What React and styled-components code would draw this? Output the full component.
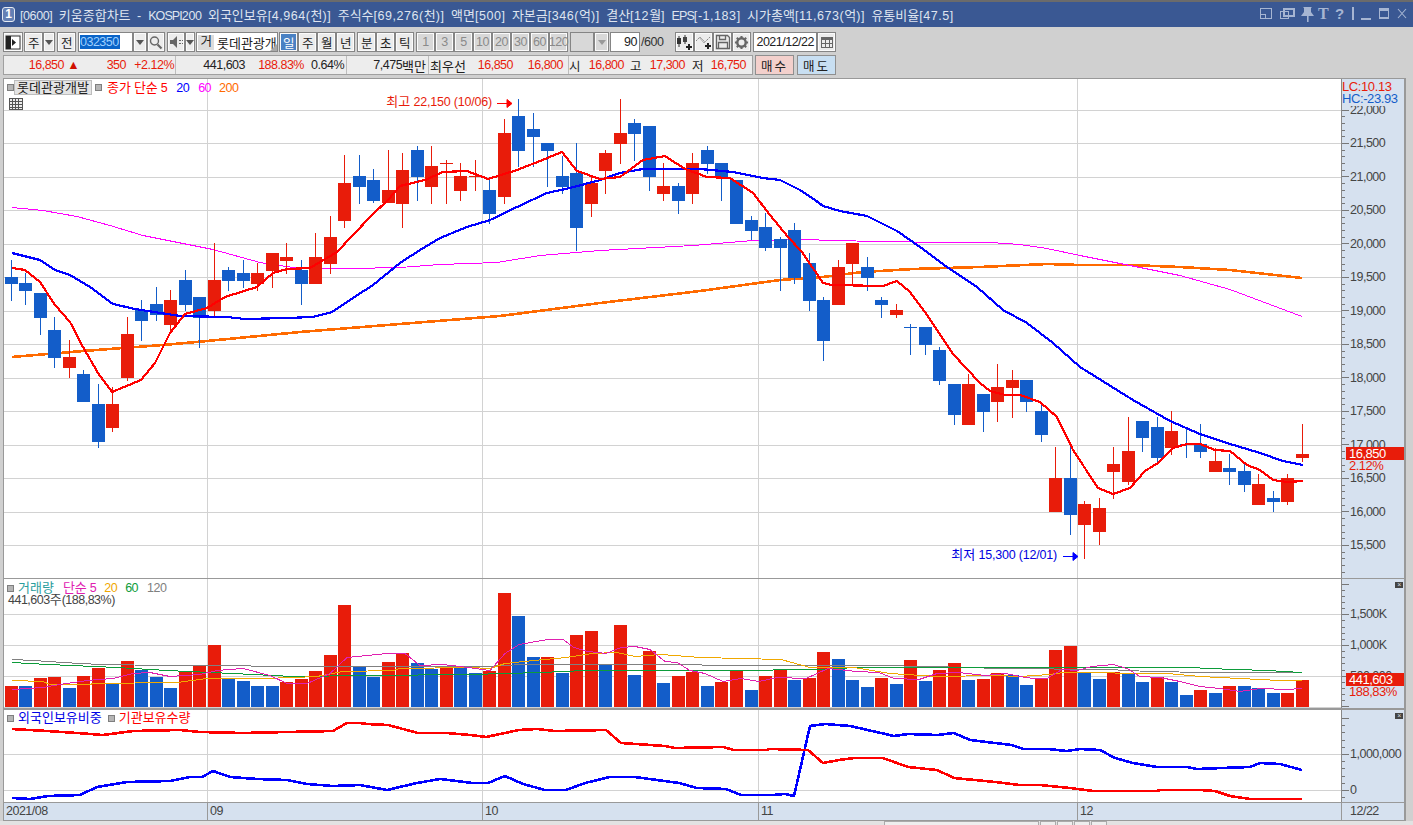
import React from 'react';
import styled, { createGlobalStyle } from 'styled-components';

const FONT = `"Liberation Sans", "Noto Sans CJK KR", sans-serif`;

// [color, wickTop, bodyTop, bodyBottom, wickBottom]
const CANDLES = [
  ['b',260,277,284,301],['b',273,283,291,305],['b',293,293,318,335],['b',317,330,358,368],['r',340,357,368,378],
  ['b',370,374,402,402],['b',384,404,442,448],['r',387,404,428,432],['r',317,334,378,381],['b',300,310,321,341],
  ['b',287,304,315,321],['r',290,300,325,334],['b',270,280,305,311],['b',297,297,318,348],['r',243,280,311,318],
  ['b',267,270,281,291],['b',260,273,281,288],['r',263,273,284,291],['r',253,253,271,288],['r',243,257,261,274],
  ['b',260,270,284,305],['r',233,257,284,284],['r',216,237,264,274],['r',155,183,221,228],['b',155,176,187,204],
  ['b',169,180,201,203],['r',150,190,203,203],['r',153,170,204,228],['b',146,150,177,201],['r',146,166,187,204],
  ['r',160,163,164,204],['r',163,176,191,201],['r',160,176,177,191],['b',180,190,214,224],['r',119,133,197,204],
  ['b',99,116,151,167],['b',113,129,137,167],['b',143,143,151,187],['b',156,176,187,194],['b',143,173,228,251],
  ['r',177,183,204,217],['r',150,153,171,194],['r',99,133,144,164],['b',119,123,134,161],['b',126,126,177,191],
  ['r',163,186,194,201],['b',183,186,201,214],['r',153,163,194,204],['b',146,150,164,174],['b',163,163,177,201],
  ['b',180,180,224,224],['b',216,220,231,240],['b',213,227,248,251],['b',237,239,248,291],['b',223,230,278,284],
  ['b',253,263,301,311],['b',297,300,341,361],['r',260,267,305,305],['r',243,243,264,284],['b',257,267,278,291],
  ['b',297,300,305,318],['r',304,310,315,318],['b',324,327,328,355],['b',327,327,345,355],['b',347,350,381,385],
  ['b',384,384,415,425],['r',374,384,425,425],['b',394,394,412,432],['r',364,387,402,422],['r',370,380,388,418],
  ['b',380,380,402,412],['b',404,411,435,442],['r',447,478,512,512],['b',444,478,515,535],['r',501,504,525,559],
  ['r',498,508,532,545],['r',447,464,472,499],['r',417,451,482,485],['b',421,421,438,452],['b',417,427,458,463],
  ['r',411,431,448,455],['b',428,444,445,458],['b',424,444,452,458],['r',448,461,472,472],['b',454,468,472,485],
  ['b',462,471,485,492],['r',474,484,505,505],['b',491,498,502,512],['r',474,478,502,505],['r',424,454,458,462],
];

// tops of the volume bars, index lines up with the candles
const VOLUME = [
  ['r',686],['b',686],['r',678],['r',677],['b',688],['r',676],['r',668],['b',684],['r',661],['b',670],
  ['b',677],['b',688],['r',672],['r',666],['r',645],['b',679],['b',681],['b',686],['b',686],['r',682],
  ['r',679],['r',671],['r',655],['r',605],['b',667],['b',677],['r',662],['r',653],['b',663],['b',669],
  ['r',668],['b',668],['b',673],['r',671],['r',593],['b',616],['b',657],['r',657],['b',673],['r',635],
  ['r',631],['b',665],['r',625],['b',675],['r',651],['b',683],['r',676],['r',672],['b',686],['r',682],
  ['r',671],['b',690],['r',676],['r',670],['b',680],['r',678],['r',652],['b',659],['b',680],['b',687],
  ['r',678],['b',684],['r',660],['b',681],['r',670],['r',663],['b',680],['r',679],['r',673],['b',675],
  ['b',685],['r',678],['r',650],['r',646],['b',672],['b',679],['r',672],['b',674],['b',682],['r',677],
  ['b',682],['b',695],['r',690],['b',693],['r',686],['b',686],['b',688],['b',693],['r',693],['r',680],
];

const MA5 = '12,268 25,270 40,282 55,305 70,322 83,347 98,373 112,392 141,380 155,363 170,333 185,314 207,308 225,297 257,287 273,273 287,269 310,268 337,252 353,235 372,215 388,200 400,186 408,184 425,180 443,172 467,171 488,179 517,170 540,161 562,152 577,171 600,179 620,177 643,160 665,156 685,169 707,177 730,178 753,193 770,215 788,237 802,252 823,283 832,285 883,286 897,281 910,292 927,315 953,354 980,383 990,391 1005,395 1020,395 1040,402 1057,417 1073,450 1098,488 1113,494 1130,488 1145,471 1158,463 1173,448 1187,444 1200,444 1215,450 1230,451 1247,465 1260,470 1273,480 1287,482 1303,481';
const MA20 = '12,253 40,260 55,270 70,275 90,287 113,304 135,309 180,316 227,317 245,319 287,318 313,317 332,312 353,298 373,285 400,263 420,250 440,238 467,227 490,220 517,207 547,193 570,188 600,180 620,173 643,169 700,169 733,172 763,178 780,180 800,190 815,200 823,206 840,211 867,216 897,231 920,247 947,267 977,287 1003,310 1027,323 1053,343 1080,367 1133,400 1170,421 1200,434 1230,444 1257,452 1283,461 1303,465';
const MA60 = '12,207 43,210 77,216 110,225 143,235 183,243 213,249 260,262 300,268 350,268 400,267 440,264 497,262 540,255 600,250 693,245 753,240 800,239 875,241 947,242 990,242 1020,244 1047,248 1080,255 1130,265 1180,275 1230,289 1302,316';
const MA200 = '12,357 83,351 163,345 207,341 300,332 400,324 500,316 600,303 700,291 780,280 823,277 863,272 913,269 980,267 1047,264 1080,265 1130,265 1180,267 1230,270 1302,278';

const VOL5 = '12,689 43,687 60,684 87,680 113,678 133,673 150,672 170,676 200,674 217,670 243,668 270,675 287,683 307,683 330,673 347,657 387,653 405,653 420,665 443,664 468,667 490,670 505,653 519,644 548,639 563,639 574,647 588,651 606,653 621,647 635,646 650,649 665,661 677,662 690,670 705,673 723,681 741,678 759,681 777,677 806,678 828,668 857,671 879,672 894,678 919,679 937,673 959,672 985,675 1006,673 1020,676 1033,678 1047,678 1062,669 1077,670 1092,666 1113,664 1127,668 1140,676 1160,677 1180,681 1200,686 1220,688 1240,691 1260,688 1287,689 1302,688';
const VOL20 = '12,680 43,681 50,684 90,684 93,683 177,682 207,678 263,678 293,677 317,676 343,671 393,670 400,668 470,667 490,668 505,663 534,660 566,657 592,653 617,652 635,656 661,654 701,657 741,658 781,659 810,667 854,667 890,673 937,676 995,675 1020,676 1050,674 1063,672 1167,673 1200,676 1240,678 1280,680 1302,680';
const VOL60 = '12,662 48,664 117,667 167,670 233,673 293,676 367,675 470,674 541,672 585,670 730,670 817,669 857,667 932,667 1048,667 1193,667 1207,668 1267,670 1302,672';
const VOL120 = '12,659 33,660 63,662 100,664 167,665 333,666 470,666 486,666 523,664 875,665 932,666 1000,668 1107,669 1150,671 1208,672 1302,672';

const FOREIGN = '12,798 30,799 48,796 80,795 97,787 127,782 170,781 190,777 202,777 213,771 230,777 257,779 287,780 307,784 333,786 360,785 387,790 417,783 440,779 472,783 488,783 505,776 523,784 545,790 566,790 585,783 610,777 635,777 679,783 697,788 726,789 741,795 772,795 785,794 794,796 810,726 825,724 850,726 894,736 908,734 937,735 954,733 970,740 995,743 1012,745 1023,749 1048,749 1067,751 1080,749 1100,750 1115,758 1133,763 1157,767 1187,767 1197,769 1222,768 1250,767 1260,763 1280,764 1302,770';
const INSTITUTION = '12,729 47,731 77,733 103,735 133,731 180,730 200,732 243,733 287,732 333,731 347,723 360,723 367,724 388,725 418,733 447,733 470,735 486,737 519,730 537,729 555,731 606,730 621,743 665,746 675,748 723,747 734,750 766,750 770,749 808,750 823,763 839,760 854,758 883,758 908,767 937,770 954,778 995,782 1020,785 1040,785 1070,788 1093,791 1157,791 1160,790 1200,790 1215,791 1230,796 1250,799 1302,799';

const MONTHS = [207, 482, 758, 1077];
const PRICE_TICKS = ['22,000','21,500','21,000','20,500','20,000','19,500','19,000','18,500','18,000','17,500','17,000','16,500','16,000','15,500'];
const PERIODS = ['일', '주', '월', '년'];
const UNITS = ['분', '초', '틱'];
const MINUTES = ['1', '3', '5', '10', '20', '30', '60', '120'];

const RED = '#e81c0a';
const colorOf = (c) => (c === 'r' ? RED : '#135dc9');
const leftOf = (i) => Math.floor(5 + 14.51 * i);

const GlobalStyle = createGlobalStyle`
  html, body {
    margin: 0;
    padding: 0;
    overflow: hidden;
    background: #d0d0d0;
  }
`;

const Window = styled.div`
  width: 1413px;
  height: 825px;
  display: flex;
  flex-direction: column;
  overflow: hidden;
  background: #d0d0d0;
  border-top: 2px solid #6b6b6b;
  box-sizing: border-box;
  font: 12.5px ${FONT};
  letter-spacing: -0.5px;
  color: #222;
`;

const Ko = styled.span`
  font-size: 13px;
  letter-spacing: 0;
`;

const KoSvg = styled.tspan`
  font-size: 13px;
  letter-spacing: 0;
`;

// hangul runs are set a little larger than the digits, as in the terminal's font
const mixed = (text, Tag = Ko) =>
  text.split(/([가-힣]+)/).map((s, i) => (i % 2 ? <Tag key={i}>{s}</Tag> : s));

const TitleBar = styled.div`
  height: 25px;
  flex: none;
  display: flex;
  align-items: center;
  background: #3a5893;
  color: #dfe5f0;
  padding: 0 0 0 2px;
`;

const Badge = styled.div`
  width: 13px;
  height: 15px;
  margin-right: 5px;
  box-sizing: border-box;
  border: 1px solid #e6ebf3;
  border-radius: 3px;
  background: #6480b4;
  color: #fff;
  font-size: 12px;
  font-weight: bold;
  text-align: center;
  line-height: 13px;
  letter-spacing: 0;
`;

const TitleText = styled.div`
  flex: 1;
  white-space: pre;
  letter-spacing: 0.55px;
  word-spacing: 2.4px;
`;

const Tight = styled.span`
  letter-spacing: ${(p) => p.$s}px;
`;

const TitleIcons = styled.div`
  display: flex;
  align-items: center;
`;

const Toolbar = styled.div`
  height: 51px;
  flex: none;
  display: flex;
  flex-direction: column;
  gap: 3px;
  padding: 5px 0 0 3px;
  box-sizing: border-box;
`;

const Row = styled.div`
  display: flex;
  height: ${(p) => p.$h}px;
  align-items: stretch;
`;

const Btn = styled.div`
  width: ${(p) => p.$w}px;
  margin-left: ${(p) => p.$ml || 0}px;
  box-sizing: border-box;
  display: flex;
  align-items: center;
  justify-content: center;
  flex: none;
  border: 1px solid #858585;
  box-shadow: inset 0 0 0 1px #fbfbfb;
  background: ${(p) => (p.$active ? '#4a81c3' : p.$off ? '#d8d8d8' : '#ececec')};
  color: ${(p) => (p.$active ? '#fff' : p.$off ? '#8a8a8a' : '#222')};
  white-space: nowrap;
`;

const Arrow = styled.span`
  width: 0;
  height: 0;
  border-left: 4px solid transparent;
  border-right: 4px solid transparent;
  border-top: 5px solid ${(p) => p.$color || '#555'};
`;

const CodeInput = styled.div`
  width: 55px;
  margin-left: 2px;
  flex: none;
  box-sizing: border-box;
  background: #fff;
  border: 1px solid #858585;
  padding: 2px 1px;
  display: flex;
`;

const Selected = styled.span`
  background: #0a64c8;
  color: #9fd0ff;
  line-height: 15px;
  padding-right: 1px;
`;

const Combo = styled.div`
  width: 82px;
  margin-left: 1px;
  flex: none;
  box-sizing: border-box;
  position: relative;
  display: flex;
  align-items: center;
  gap: 3px;
  background: #fff;
  border: 1px solid #858585;
  padding: 1px;
  overflow: hidden;
  white-space: nowrap;
`;

const ComboTag = styled.span`
  width: 16px;
  height: 15px;
  line-height: 15px;
  background: #dcdcdc;
  text-align: center;
  flex: none;
`;

const ComboCorner = styled.span`
  position: absolute;
  right: 0;
  bottom: 0;
  border-left: 7px solid transparent;
  border-bottom: 7px solid #a8a8a8;
`;

const Field = styled.div`
  width: ${(p) => p.$w}px;
  margin-left: ${(p) => p.$ml || 0}px;
  flex: none;
  box-sizing: border-box;
  background: ${(p) => p.$bg || '#fff'};
  border: 1px solid #858585;
  display: flex;
  align-items: center;
  justify-content: flex-end;
  padding: 0 2px;
`;

const Plain = styled.div`
  width: ${(p) => p.$w}px;
  flex: none;
  display: flex;
  align-items: center;
  padding-left: 1px;
  box-sizing: border-box;
  color: #333;
`;

const Quote = styled.div`
  display: flex;
  width: 750px;
  flex: none;
  box-sizing: border-box;
  border: 1px solid #a0a0a0;
  background: #ededed;
`;

const QuoteCell = styled.div`
  width: ${(p) => p.$w}px;
  flex: none;
  box-sizing: border-box;
  display: flex;
  align-items: center;
  justify-content: ${(p) => (p.$end ? 'flex-end' : 'flex-start')};
  padding-right: ${(p) => (p.$end ? 2 : 0)}px;
  border-right: ${(p) => (p.$last ? 'none' : '1px solid #bdbdbd')};
  white-space: nowrap;
`;

const Val = styled.span`
  width: ${(p) => p.$w}px;
  flex: none;
  text-align: right;
  color: ${(p) => p.$c || '#222'};
`;

const TradeBtn = styled.div`
  width: 39px;
  margin-left: ${(p) => p.$ml}px;
  flex: none;
  box-sizing: border-box;
  border: 1px solid #8f8f8f;
  background: ${(p) => p.$bg};
  display: flex;
  align-items: center;
  justify-content: center;
  letter-spacing: 2px;
`;

const Chart = styled.div`
  width: 1403px;
  margin-left: 3px;
  flex: none;
  box-sizing: border-box;
  border: 1px solid #999;
  border-right-width: 2px;
  background: #fff;
  display: flex;
  flex-direction: column;
`;

const Pane = styled.div`
  height: ${(p) => p.$h}px;
  flex: none;
  box-sizing: border-box;
  display: flex;
  border-bottom: ${(p) => p.$line || 1}px solid #999;
`;

const Plot = styled.div`
  width: 1337px;
  flex: none;
  position: relative;
  overflow: hidden;
  svg { display: block; }
`;

const Axis = styled.div`
  flex: 1;
  position: relative;
  background: #d6e1ef;
  border-left: 1px solid #888;
  overflow: hidden;
  svg { display: block; }
`;

const Legend = styled.div`
  position: absolute;
  left: ${(p) => p.$x}px;
  top: ${(p) => p.$y}px;
  display: flex;
  align-items: center;
  white-space: pre;
  line-height: 14px;
`;

const Square = styled.span`
  width: 5px;
  height: 5px;
  flex: none;
  border: 1px solid #7f7f7f;
  background: #b5b5b5;
  margin: ${(p) => p.$m || '0'};
`;

const StockChip = styled.span`
  width: 78px;
  height: 15px;
  line-height: 14px;
  box-sizing: border-box;
  text-align: center;
  background: #e4e4e4;
  border: 1px solid #bdbdbd;
  margin-right: 3px;
  letter-spacing: 0;
  font-size: 13px;
`;

const Item = styled.span`
  color: ${(p) => p.$c};
  margin-left: ${(p) => p.$ml || 0}px;
`;

const GridButton = styled.div`
  position: absolute;
  left: 5px;
  top: 19px;
  line-height: 0;
`;

const AxisReadout = styled.div`
  position: absolute;
  left: 0;
  top: 0;
  width: 100%;
  height: 25px;
  background: #d6e1ef;
  line-height: 12px;
  padding-top: 2px;
  font-size: 13px;
  letter-spacing: -0.4px;
`;

const Readout = styled.div`
  color: ${(p) => p.$c};
`;

const PriceTag = styled.div`
  position: absolute;
  left: 4px;
  top: ${(p) => p.$y}px;
  width: 58px;
  height: 13px;
  line-height: 13px;
  background: ${RED};
  color: #fff;
  padding-left: 3px;
  box-sizing: border-box;
  font-size: 13px;
`;

const TagNote = styled.div`
  position: absolute;
  left: 7px;
  top: ${(p) => p.$y}px;
  color: ${RED};
  line-height: 12px;
  font-size: 13px;
`;

const CloseBox = styled.div`
  position: absolute;
  right: 1px;
  top: ${(p) => p.$y}px;
  width: 8px;
  height: 6px;
  background: #444;
  color: #ddd;
  font-size: 7px;
  line-height: 6px;
  text-align: center;
`;

const TickText = styled.text`
  font: 12.5px ${FONT};
  letter-spacing: -0.5px;
  fill: #444;
`;

const NoteText = styled.text`
  font: 12.5px ${FONT};
  letter-spacing: -0.2px;
  fill: ${(p) => p.$c};
`;

const DateBar = styled.div`
  height: 17px;
  flex: none;
  display: flex;
  background: #d6e1ef;
  color: #444;
  line-height: 17px;
`;

const DateCell = styled.div`
  width: ${(p) => p.$w}px;
  flex: none;
  box-sizing: border-box;
  padding-left: 2px;
  border-right: 1px solid #999;
  &:last-child { border-right: none; flex: 1; padding-left: 8px; }
`;

const Footer = styled.div`
  flex: 1;
  display: flex;
  align-items: flex-start;
  padding: 0 0 0 884px;
  gap: 1px;
  background: #e2e2e2;
`;

const FooterBox = styled.div`
  width: ${(p) => p.$w}px;
  height: 5px;
  flex: none;
  background: #eee;
  border: 1px solid #aaa;
  border-bottom: none;
  box-sizing: border-box;
`;

function Series({ points, color, width = 2.2 }) {
  // one pixel lines sit on the pixel centre, otherwise flat stretches can vanish
  const shift = width === 1 ? 'translate(0 0.5)' : undefined;
  return <polyline points={points} transform={shift} fill="none" stroke={color} strokeWidth={width} strokeLinejoin="round" shapeRendering="crispEdges" />;
}

function Grid({ ys, top, bottom }) {
  return (
    <g stroke="#d2d2d2" strokeWidth="1" shapeRendering="crispEdges">
      {ys.map((y) => <line key={y} x1="4" x2="1341" y1={y + 0.5} y2={y + 0.5} />)}
      {MONTHS.map((x) => <line key={x} x1={x + 0.5} x2={x + 0.5} y1={top} y2={bottom} />)}
    </g>
  );
}

function Ticks({ top, bottom, first, step, every, labels }) {
  const marks = [];
  let n = 0;
  for (let y = first; y < bottom; y += step) {
    if (y > top) marks.push(<line key={y} x1="1342" x2={n % every === 0 ? 1349 : 1345} y1={Math.round(y) + 0.5} y2={Math.round(y) + 0.5} />);
    n += 1;
  }
  return (
    <svg width="64" height={bottom - top} viewBox={`1342 ${top} 64 ${bottom - top}`}>
      <g stroke="#777" shapeRendering="crispEdges">{marks}</g>
      {labels.map(([text, y]) => <TickText key={text} x="1350" y={y + 4}>{text}</TickText>)}
    </svg>
  );
}

function TitleIconSet() {
  const c = '#a6b5d2';
  return (
    <TitleIcons>
      <svg width="154" height="20" viewBox="0 0 154 20" fill="none" stroke={c}>
        <g shapeRendering="crispEdges" strokeWidth="1.4">
          <rect x="1.5" y="3.5" width="11" height="10" />
          <rect x="1.5" y="9.5" width="5" height="4" />
          <rect x="21.5" y="6.5" width="8" height="7" />
          <rect x="24.5" y="3.5" width="10" height="7" strokeWidth="2" />
          <line x1="94" x2="94" y1="2" y2="15" />
          <line x1="102" x2="112" y1="13.5" y2="13.5" strokeWidth="2" />
          <rect x="120.5" y="4" width="9" height="9" />
          <line x1="120" x2="130" y1="4" y2="4" strokeWidth="3" />
        </g>
        <path d="M44 2h9l-1 1v4l3 4H42l3-4V3zM48 11h1.6v6H48z" fill={c} stroke="none" />
        <path d="M139 4l8 9M147 4l-8 9" strokeWidth="1.1" />
        <text x="59" y="14" fill={c} stroke="none" fontFamily="Liberation Serif" fontWeight="bold" fontSize="16">T</text>
        <text x="76" y="14" fill={c} stroke="none" fontFamily="Liberation Sans" fontWeight="bold" fontSize="15">?</text>
      </svg>
    </TitleIcons>
  );
}

function PanelIcon() {
  return (
    <svg width="16" height="15" viewBox="0 0 16 15">
      <rect x="1" y="1" width="14" height="13" fill="#fff" stroke="#333" />
      <rect x="1" y="1" width="5" height="13" fill="#222" />
      <path d="M7 4l4 3.5-4 3.5z" fill="#222" />
    </svg>
  );
}

function SearchIcon() {
  return (
    <svg width="14" height="15" viewBox="0 0 14 15" fill="none" stroke="#666">
      <circle cx="5.5" cy="6" r="4" strokeWidth="1.4" />
      <path d="M8.5 9.5l4 4" strokeWidth="2.2" />
    </svg>
  );
}

function SpeakerIcon() {
  return (
    <svg width="15" height="14" viewBox="0 0 15 14">
      <path d="M1 5h3l4-4v12l-4-4H1z" fill="#666" />
      <path d="M10 5h2v1h-2zM10 8h2v1h-2zM13 5h1v1h-1zM13 8h1v1h-1z" fill="#666" />
    </svg>
  );
}

function CandleAddIcon() {
  return (
    <svg width="17" height="17" viewBox="0 0 17 17">
      <path d="M3 2v11M9 1v9" stroke="#333" />
      <rect x="1" y="4" width="4" height="6" fill="#333" />
      <rect x="7" y="3" width="4" height="5" fill="#444" />
      <path d="M12 10h2v2h2v2h-2v2h-2v-2h-2v-2h2z" fill="#222" />
    </svg>
  );
}

function LineAddIcon() {
  return (
    <svg width="17" height="17" viewBox="0 0 17 17" fill="none">
      <path d="M1 7l4-4 5 5 5-5" stroke="#888" strokeDasharray="2 1" />
      <path d="M4 3l5 6 3-3" stroke="#aaa" />
      <path d="M12 9h2v2h2v2h-2v2h-2v-2h-2v-2h2z" fill="#222" />
    </svg>
  );
}

function SaveIcon() {
  return (
    <svg width="16" height="16" viewBox="0 0 16 16" fill="none" stroke="#666">
      <path d="M1.5 1.5h11l2 2v11h-13z" strokeWidth="1.3" />
      <path d="M4.5 1.5v4h6v-4M3.5 14.5v-6h9v6" strokeWidth="1.3" />
    </svg>
  );
}

function GearIcon() {
  return (
    <svg width="15" height="15" viewBox="0 0 16 16">
      <circle cx="8" cy="8" r="4.5" fill="none" stroke="#666" strokeWidth="2.6" />
      <path d="M8 1v3M8 12v3M1 8h3M12 8h3M3 3l2 2M11 11l2 2M13 3l-2 2M5 11l-2 2" stroke="#666" strokeWidth="2.2" />
    </svg>
  );
}

function CalendarIcon() {
  return (
    <svg width="14" height="13" viewBox="0 0 14 13" fill="none" stroke="#666" shapeRendering="crispEdges">
      <rect x="1.5" y="1.5" width="11" height="10" />
      <rect x="1" y="1" width="12" height="3" fill="#666" stroke="none" />
      <path d="M1 7.5h12M5.5 4v8M9 4v8" />
    </svg>
  );
}

function GridIcon() {
  return (
    <svg width="14" height="12" viewBox="0 0 14 12" fill="#eee" stroke="#555" shapeRendering="crispEdges">
      <rect x="0.5" y="0.5" width="13" height="11" />
      <path d="M0 3.5h14M0 6.5h14M0 9.5h14M3.5 0v12M6.5 0v12M9.5 0v12" />
    </svg>
  );
}

function ControlRow() {
  return (
    <Row $h={20}>
      <Btn $w={20}><PanelIcon /></Btn>
      <Btn $w={19} $ml={1}>주</Btn>
      <Btn $w={12}><Arrow /></Btn>
      <Btn $w={19} $ml={2}>전</Btn>
      <CodeInput><Selected>032350</Selected></CodeInput>
      <Btn $w={14}><Arrow /></Btn>
      <Btn $w={18}><SearchIcon /></Btn>
      <Btn $w={18} $ml={2}><SpeakerIcon /></Btn>
      <Btn $w={10}><Arrow /></Btn>
      <Combo><ComboTag>거</ComboTag><Ko>롯데관광개</Ko><ComboCorner /></Combo>
      {PERIODS.map((t, i) => <Btn key={t} $w={19} $ml={i === 0 ? 1 : 0} $active={i === 0}>{t}</Btn>)}
      {UNITS.map((t, i) => <Btn key={t} $w={19} $ml={i === 0 ? 2 : 0}>{t}</Btn>)}
      {MINUTES.map((t, i) => <Btn key={t} $w={19} $ml={i === 0 ? 2 : 0} $off>{t}</Btn>)}
      <Field $w={24} $ml={2} $bg="#d8d8d8" />
      <Btn $w={15} $off><Arrow $color="#999" /></Btn>
      <Field $w={30} $ml={1}>90</Field>
      <Plain $w={35}>/600</Plain>
      <Btn $w={19}><CandleAddIcon /></Btn>
      <Btn $w={19}><LineAddIcon /></Btn>
      <Btn $w={19}><SaveIcon /></Btn>
      <Btn $w={19}><GearIcon /></Btn>
      <Field $w={64} $ml={2}>2021/12/22</Field>
      <Btn $w={19}><CalendarIcon /></Btn>
    </Row>
  );
}

function QuoteRow() {
  return (
    <Row $h={20}>
      <Quote>
        <QuoteCell $w={172}>
          <Val $w={60} $c={RED}>16,850</Val><Val $w={15} $c="#d01000">▲</Val>
          <Val $w={47} $c={RED}>350</Val><Val $w={48} $c={RED}>+2.12%</Val>
        </QuoteCell>
        <QuoteCell $w={171}>
          <Val $w={69}>441,603</Val><Val $w={59} $c={RED}>188.83%</Val><Val $w={40}>0.64%</Val>
        </QuoteCell>
        <QuoteCell $w={82} $end>{mixed('7,475백만')}</QuoteCell>
        <QuoteCell $w={140}>
          <Val $w={37}><Ko>최우선</Ko></Val><Val $w={47} $c={RED}>16,850</Val><Val $w={50} $c={RED}>16,800</Val>
        </QuoteCell>
        <QuoteCell $w={184} $last>
          <Val $w={10}>시</Val><Val $w={45} $c={RED}>16,800</Val><Val $w={17}>고</Val><Val $w={44} $c={RED}>17,300</Val>
          <Val $w={18}>저</Val><Val $w={43} $c={RED}>16,750</Val>
        </QuoteCell>
      </Quote>
      <TradeBtn $ml={2} $bg="#f3d0cc">매수</TradeBtn>
      <TradeBtn $ml={3} $bg="#c8dff2">매도</TradeBtn>
    </Row>
  );
}

function PricePane() {
  const gridYs = PRICE_TICKS.map((_, i) => Math.round(109.5 + 33.5 * i));
  return (
    <Pane $h={500}>
      <Plot>
        <svg width="1337" height="499" viewBox="4 79 1337 499">
          <Grid ys={gridYs} top={79} bottom={578} />
          <Series points={MA200} color="#ff6a00" width={2.6} />
          <Series points={MA60} color="#ff00ff" width={1} />
          {CANDLES.map(([c, wt, bt, bb, wb], i) => {
            const x = leftOf(i);
            return (
              <g key={i} fill={colorOf(c)} shapeRendering="crispEdges">
                <rect x={x + 6} y={wt} width="1" height={wb - wt} />
                <rect x={x} y={bt} width="13" height={bb - bt} />
              </g>
            );
          })}
          <Series points={MA20} color="#0000ff" />
          <Series points={MA5} color="#ff0000" />
          <NoteText x="492" y="106" textAnchor="end" $c={RED}>{mixed('최고 22,150 (10/06)', KoSvg)}</NoteText>
          <path d="M497 103.5h10v-4l5 4-5 4v-4" fill="#f00" stroke="#f00" />
          <NoteText x="1057" y="559" textAnchor="end" $c="#0000e0">{mixed('최저 15,300 (12/01)', KoSvg)}</NoteText>
          <path d="M1063 556.5h10v-4l5 4-5 4v-4" fill="#00f" stroke="#00f" />
        </svg>
        <Legend $x={3} $y={1}>
          <Square />
          <StockChip>롯데관광개발</StockChip>
          <Square $m="0 5px 0 0" />
          <Item $c="#f00">{mixed('종가 단순 5')}</Item>
          <Item $c="#00f" $ml={9}>20</Item>
          <Item $c="#f0f" $ml={9}>60</Item>
          <Item $c="#ff6a00" $ml={8}>200</Item>
        </Legend>
        <GridButton><GridIcon /></GridButton>
      </Plot>
      <Axis>
        <Ticks top={79} bottom={578} first={109.5} step={6.7} every={5}
          labels={PRICE_TICKS.map((t, i) => [t, Math.round(109.5 + 33.5 * i)])} />
        <AxisReadout>
          <Readout $c={RED}>LC:10.13</Readout>
          <Readout $c="#135dc9">HC:-23.93</Readout>
        </AxisReadout>
        <PriceTag $y={368}>16,850</PriceTag>
        <TagNote $y={381}>2.12%</TagNote>
      </Axis>
    </Pane>
  );
}

function VolumePane() {
  return (
    <Pane $h={131} $line={2}>
      <Plot>
        <svg width="1337" height="129" viewBox="4 579 1337 129">
          <Grid ys={[614, 645, 676, 707]} top={579} bottom={708} />
          {VOLUME.map(([c, top], i) => (
            <rect key={i} x={leftOf(i)} y={top} width="13" height={707 - top} fill={colorOf(c)} shapeRendering="crispEdges" />
          ))}
          <Series points={VOL120} color="#808080" width={1} />
          <Series points={VOL60} color="#0c9c3a" width={1} />
          <Series points={VOL20} color="#f0a800" width={1} />
          <Series points={VOL5} color="#e020b0" width={1} />
        </svg>
        <Legend $x={3} $y={2}>
          <Square $m="0 4px 0 0" />
          <Item $c="#2a9d9d"><Ko>거래량</Ko></Item>
          <Item $c="#e020b0" $ml={9}>{mixed('단순 5')}</Item>
          <Item $c="#f0a800" $ml={8}>20</Item>
          <Item $c="#0c9c3a" $ml={8}>60</Item>
          <Item $c="#808080" $ml={9}>120</Item>
        </Legend>
        <Legend $x={4} $y={14}><Item $c="#444">{mixed('441,603주(188,83%)')}</Item></Legend>
      </Plot>
      <Axis>
        <Ticks top={579} bottom={708} first={583.5} step={6.15} every={5}
          labels={[['1,500K', 614], ['1,000K', 645], ['500,000', 676]]} />
        <PriceTag $y={94}>441,603</PriceTag>
        <TagNote $y={107}>188,83%</TagNote>
        <CloseBox $y={3}>×</CloseBox>
      </Axis>
    </Pane>
  );
}

function HoldingsPane() {
  return (
    <Pane $h={93}>
      <Plot>
        <svg width="1337" height="92" viewBox="4 710 1337 92">
          <Grid ys={[754, 790]} top={710} bottom={802} />
          <Series points={FOREIGN} color="#0000ff" width={2.6} />
          <Series points={INSTITUTION} color="#ff0000" width={2.6} />
        </svg>
        <Legend $x={3} $y={1}>
          <Square $m="0 4px 0 0" />
          <Item $c="#0000e6"><Ko>외국인보유비중</Ko></Item>
          <Square $m="0 4px 0 6px" />
          <Item $c="#f00"><Ko>기관보유수량</Ko></Item>
        </Legend>
      </Plot>
      <Axis>
        <Ticks top={710} bottom={802} first={718} step={7.2} every={5}
          labels={[['1,000,000', 754], ['0', 790]]} />
        <CloseBox $y={3}>×</CloseBox>
      </Axis>
    </Pane>
  );
}

function App() {
  return (
    <>
      <GlobalStyle />
      <Window>
        <TitleBar>
          <Badge>1</Badge>
          <TitleText>
            <Tight $s={-0.4}>[0600]</Tight>{mixed(' 키움종합차트 - ')}<Tight $s={-0.9}>KOSPI</Tight><Tight $s={-0.4}>200</Tight>
            {mixed(' 외국인보유[4,964(천)] 주식수[69,276(천)] 액면[500] 자본금[346(억)] 결산[12월] ')}<Tight $s={-0.9}>EPS</Tight>
            {mixed('[-1,183] 시가총액[11,673(억)] 유통비율[47.5]')}
          </TitleText>
          <TitleIconSet />
        </TitleBar>
        <Toolbar>
          <ControlRow />
          <QuoteRow />
        </Toolbar>
        <Chart>
          <PricePane />
          <VolumePane />
          <HoldingsPane />
          <DateBar>
            <DateCell $w={204}>2021/08</DateCell>
            <DateCell $w={275}>09</DateCell>
            <DateCell $w={276}>10</DateCell>
            <DateCell $w={319}>11</DateCell>
            <DateCell $w={264}>12</DateCell>
            <DateCell>12/22</DateCell>
          </DateBar>
        </Chart>
        <Footer>
          <FooterBox $w={155} />
          <FooterBox $w={16} />
          <FooterBox $w={16} />
          <FooterBox $w={16} />
          <FooterBox $w={16} />
        </Footer>
      </Window>
    </>
  );
}

export default App;
